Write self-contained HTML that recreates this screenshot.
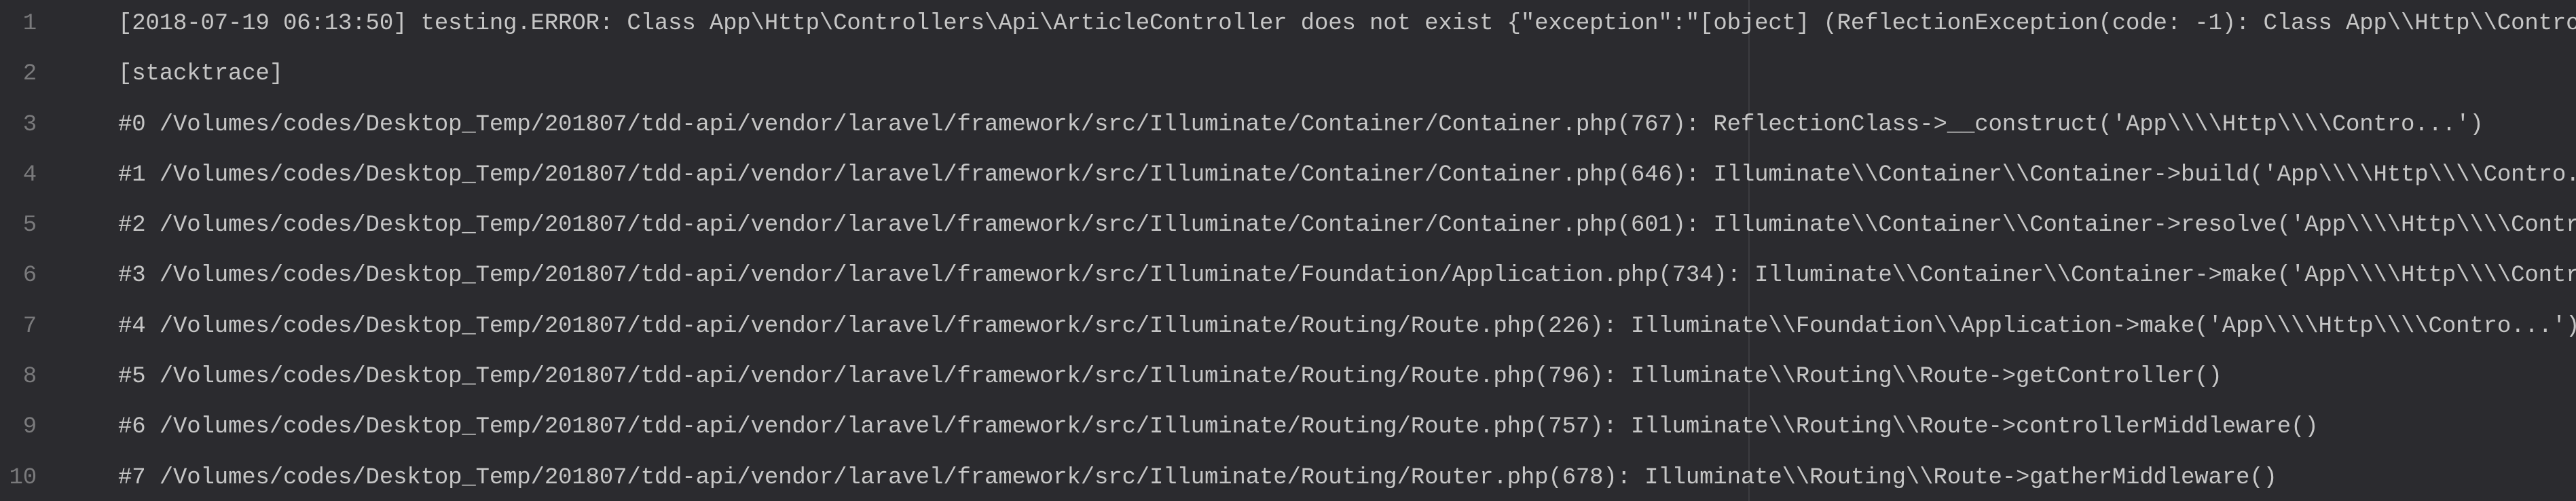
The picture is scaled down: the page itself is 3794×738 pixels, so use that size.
<!DOCTYPE html>
<html><head><meta charset="utf-8"><style>
html,body{margin:0;padding:0;width:3794px;height:738px;overflow:hidden;background:#2b2b2f;}
.wrap{position:absolute;left:0;top:-2px;width:3794px;height:740px;overflow:hidden;}
.row{height:74.3px;line-height:74.3px;position:relative;white-space:pre;font-family:"Liberation Mono","DejaVu Sans Mono",monospace;font-size:34px;letter-spacing:-0.15px;overflow:hidden;width:3794px;}
.n{position:absolute;left:0;width:54px;text-align:right;color:#7a7a7c;}
.t{position:absolute;left:174px;color:#c6c6c6;}
.vl{position:absolute;left:2575px;top:0;width:2px;height:738px;background:#3c3c40;}
</style></head><body>
<div class="vl"></div>
<div class="wrap">
<div class="row"><span class="n">1</span><span class="t">[2018-07-19 06:13:50] testing.ERROR: Class App\Http\Controllers\Api\ArticleController does not exist {"exception":"[object] (ReflectionException(code: -1): Class App\\Http\\Controll</span></div>
<div class="row"><span class="n">2</span><span class="t">[stacktrace]</span></div>
<div class="row"><span class="n">3</span><span class="t">#0 /Volumes/codes/Desktop_Temp/201807/tdd-api/vendor/laravel/framework/src/Illuminate/Container/Container.php(767): ReflectionClass-&gt;__construct('App\\\\Http\\\\Contro...')</span></div>
<div class="row"><span class="n">4</span><span class="t">#1 /Volumes/codes/Desktop_Temp/201807/tdd-api/vendor/laravel/framework/src/Illuminate/Container/Container.php(646): Illuminate\\Container\\Container-&gt;build('App\\\\Http\\\\Contro..</span></div>
<div class="row"><span class="n">5</span><span class="t">#2 /Volumes/codes/Desktop_Temp/201807/tdd-api/vendor/laravel/framework/src/Illuminate/Container/Container.php(601): Illuminate\\Container\\Container-&gt;resolve('App\\\\Http\\\\Contro.</span></div>
<div class="row"><span class="n">6</span><span class="t">#3 /Volumes/codes/Desktop_Temp/201807/tdd-api/vendor/laravel/framework/src/Illuminate/Foundation/Application.php(734): Illuminate\\Container\\Container-&gt;make('App\\\\Http\\\\Contro.</span></div>
<div class="row"><span class="n">7</span><span class="t">#4 /Volumes/codes/Desktop_Temp/201807/tdd-api/vendor/laravel/framework/src/Illuminate/Routing/Route.php(226): Illuminate\\Foundation\\Application-&gt;make('App\\\\Http\\\\Contro...')</span></div>
<div class="row"><span class="n">8</span><span class="t">#5 /Volumes/codes/Desktop_Temp/201807/tdd-api/vendor/laravel/framework/src/Illuminate/Routing/Route.php(796): Illuminate\\Routing\\Route-&gt;getController()</span></div>
<div class="row"><span class="n">9</span><span class="t">#6 /Volumes/codes/Desktop_Temp/201807/tdd-api/vendor/laravel/framework/src/Illuminate/Routing/Route.php(757): Illuminate\\Routing\\Route-&gt;controllerMiddleware()</span></div>
<div class="row"><span class="n">10</span><span class="t">#7 /Volumes/codes/Desktop_Temp/201807/tdd-api/vendor/laravel/framework/src/Illuminate/Routing/Router.php(678): Illuminate\\Routing\\Route-&gt;gatherMiddleware()</span></div>
</div>
</body></html>
